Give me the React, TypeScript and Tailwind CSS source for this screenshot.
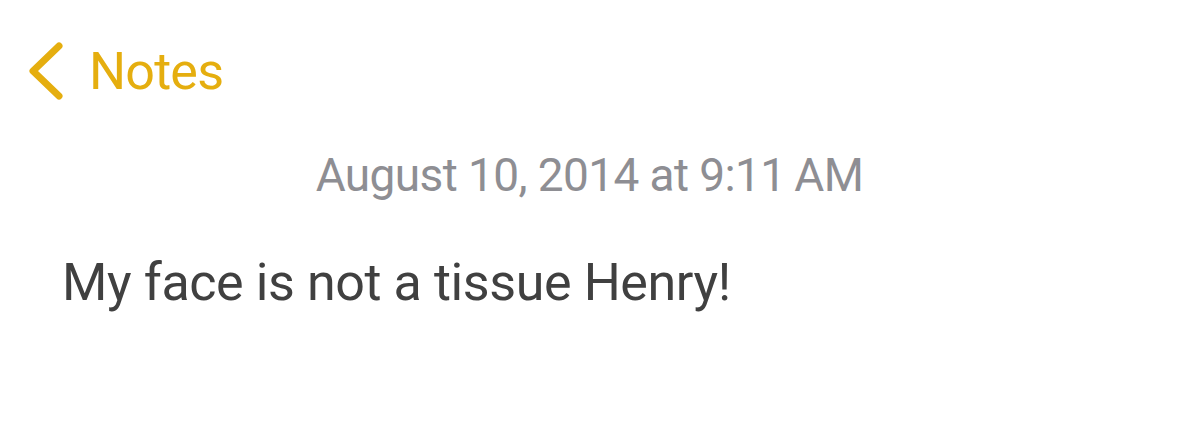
export default function App() {
  return (
    <div className="w-[1179px] h-[431px] bg-white overflow-hidden" style={{ fontFamily: "Roboto, 'Noto Sans', sans-serif" }}>
      <div className="flex items-center pl-[28px] pt-[44px] h-[100px]">
        <svg width="36" height="58" viewBox="0 0 36 58" className="shrink-0 -mt-[2px]">
          <path d="M31 4 L5 29 L31 54" fill="none" stroke="#e5ae0f" strokeWidth="7" strokeLinecap="round" strokeLinejoin="round" />
        </svg>
        <span className="ml-[25px] text-[52px] leading-none text-[#e5ae0f] tracking-[-0.8px]">Notes</span>
      </div>
      <div className="text-center pt-[52px] text-[46px] leading-none text-[#8e8e93] tracking-[-0.6px]">
        August 10, 2014 at 9:11{"\u2009"}AM
      </div>
      <div className="pl-[62px] pt-[59px] text-[52px] leading-none text-[#404040] tracking-[-0.4px]">
        My face is not a tissue Henry!
      </div>
    </div>
  );
}
